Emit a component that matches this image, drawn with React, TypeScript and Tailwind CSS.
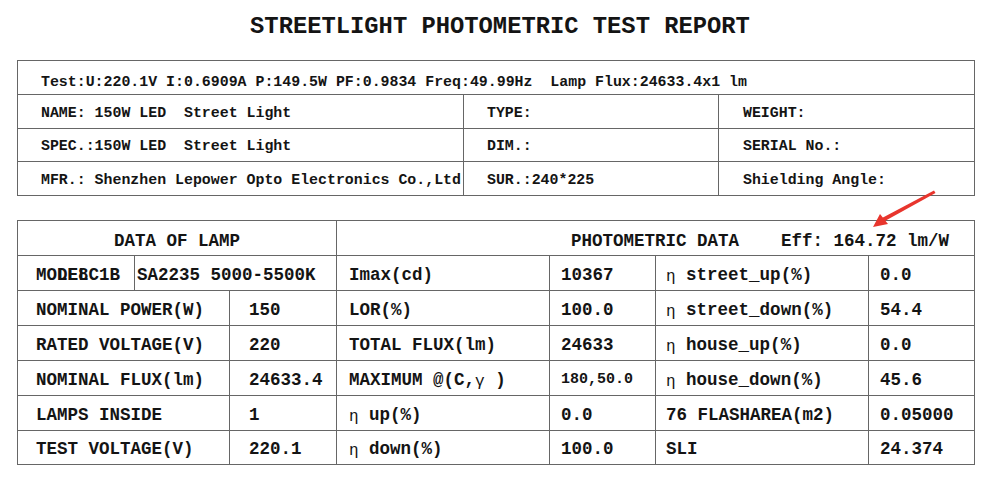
import React from "react";

const B = "border-[#666666]";

function Eta() {
  return <span className="font-normal text-[16px] relative top-[2px]">η</span>;
}

export default function App() {
  const mono = { fontFamily: '"Liberation Mono", "Courier New", monospace' };
  const rows1 = [
    ["NAME: 150W LED  Street Light", "TYPE:", "WEIGHT:", "h-[34px]"],
    ["SPEC.:150W LED  Street Light", "DIM.:", "SERIAL No.:", "h-[33px]"],
    ["MFR.: Shenzhen Lepower Opto Electronics Co.,Ltd", "SUR.:240*225", "Shielding Angle:", "h-[34px]"],
  ];
  const rows2: [string, string, React.ReactNode, React.ReactNode, React.ReactNode, string, string][] = [
    ["NOMINAL POWER(W)", "150", "LOR(%)", "100.0", <><Eta /> street_down(%)</>, "54.4", "h-[35px]"],
    ["RATED VOLTAGE(V)", "220", "TOTAL FLUX(lm)", "24633", <><Eta /> house_up(%)</>, "0.0", "h-[35px]"],
    [
      "NOMINAL FLUX(lm)",
      "24633.4",
      <>MAXIMUM @(C,<span className="font-normal text-[16px] relative top-[2px]">γ</span> )</>,
      <span className="text-[15px]">180,50.0</span>,
      <><Eta /> house_down(%)</>,
      "45.6",
      "h-[35px]",
    ],
    ["LAMPS INSIDE", "1", <><Eta /> up(%)</>, "0.0", "76 FLASHAREA(m2)", "0.05000", "h-[35px]"],
    ["TEST VOLTAGE(V)", "220.1", <><Eta /> down(%)</>, "100.0", "SLI", "24.374", "h-[34px]"],
  ];

  return (
    <div className="relative w-[1000px] h-[479px] bg-white text-[#141414] font-bold overflow-hidden" style={mono}>
      <div className="pt-[14px] text-center text-[23.8px] leading-[26px]">
        STREETLIGHT PHOTOMETRIC TEST REPORT
      </div>

      {/* Table 1 */}
      <div className={`ml-[17px] mt-[20px] w-[958px] border ${B} text-[14.9px] leading-[18px] whitespace-pre`}>
        <div className="h-[33px] flex items-center pl-[23px] pt-[9px]">
          Test:U:220.1V I:0.6909A P:149.5W PF:0.9834 Freq:49.99Hz  Lamp Flux:24633.4x1 lm
        </div>
        {rows1.map((r) => (
          <div key={r[0]} className={`flex border-t ${B} ${r[3]}`}>
            <div className="w-[445px] flex items-center pl-[23px] pt-[2px] overflow-visible">{r[0]}</div>
            <div className={`w-[255px] border-l ${B} flex items-center pl-[23px] pt-[2px]`}>{r[1]}</div>
            <div className={`flex-1 border-l ${B} flex items-center pl-[24px] pt-[2px]`}>{r[2]}</div>
          </div>
        ))}
      </div>

      {/* Table 2 */}
      <div className={`ml-[17px] mt-[24px] w-[958px] border ${B} text-[17.5px] leading-[20px] whitespace-pre`}>
        <div className="h-[34px] flex">
          <div className="w-[318px] flex items-center justify-center pt-[5px]">DATA OF LAMP</div>
          <div className={`flex-1 border-l ${B} flex items-center pl-[234px] pt-[5px]`}>
            PHOTOMETRIC DATA    Eff: 164.72 lm/W
          </div>
        </div>
        <div className={`h-[35px] flex border-t ${B}`}>
          <div className="w-[116px] flex items-center pl-[18px] pt-[3px]">
            <span className="relative">
              MODEL
              <span className="absolute left-0 top-0">  LE8C1B</span>
            </span>
          </div>
          <div className={`w-[202px] border-l ${B} flex items-center pl-[2px] pt-[3px]`}>SA2235 5000-5500K</div>
          <div className={`w-[213px] border-l ${B} flex items-center pl-[12px] pt-[3px]`}>Imax(cd)</div>
          <div className={`w-[106px] border-l ${B} flex items-center pl-[11px] pt-[3px]`}>10367</div>
          <div className={`w-[213px] border-l ${B} flex items-center pl-[10px] pt-[3px]`}><Eta /> street_up(%)</div>
          <div className={`flex-1 border-l ${B} flex items-center pl-[11px] pt-[3px]`}>0.0</div>
        </div>
        {rows2.map((r, i) => (
          <div key={i} className={`flex border-t ${B} ${r[6]}`}>
            <div className="w-[211px] flex items-center pl-[18px] pt-[3px]">{r[0]}</div>
            <div className={`w-[107px] border-l ${B} flex items-center pl-[19px] pt-[3px]`}>{r[1]}</div>
            <div className={`w-[213px] border-l ${B} flex items-center pl-[12px] pt-[3px]`}>{r[2]}</div>
            <div className={`w-[106px] border-l ${B} flex items-center pl-[11px] pt-[3px]`}>{r[3]}</div>
            <div className={`w-[213px] border-l ${B} flex items-center pl-[10px] pt-[3px]`}>{r[4]}</div>
            <div className={`flex-1 border-l ${B} flex items-center pl-[11px] pt-[3px]`}>{r[5]}</div>
          </div>
        ))}
      </div>

      {/* Red arrow annotation */}
      <svg className="absolute left-0 top-0 pointer-events-none" width="1000" height="479">
        <polygon points="934,190.5 935.5,193 884,221.5 882,218" fill="#e8352d" />
        <polygon points="873,227 880,214 888,224" fill="#e8352d" />
      </svg>
    </div>
  );
}
